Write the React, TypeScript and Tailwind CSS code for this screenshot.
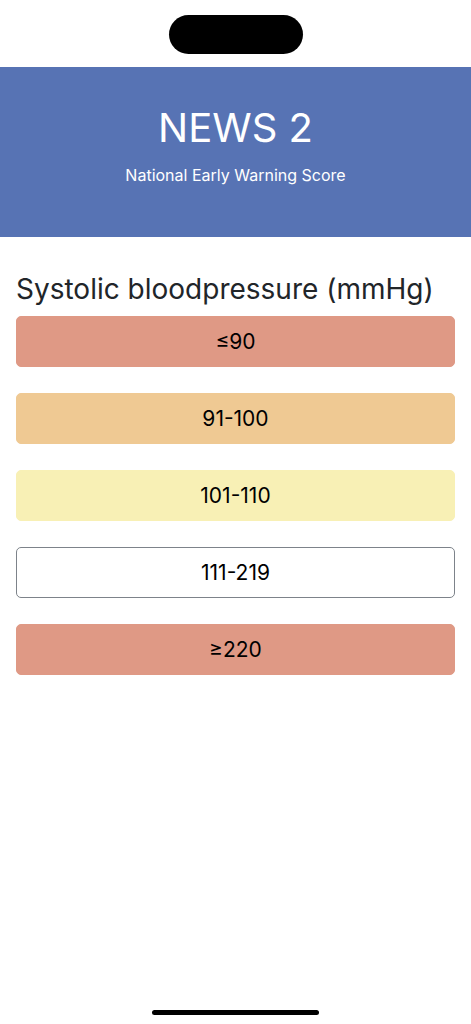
const ranges = [
  { label: "≤90", className: "bg-[#df9985] border-[#df9985]" },
  { label: "91-100", className: "bg-[#efc993] border-[#efc993]" },
  { label: "101-110", className: "bg-[#f8f0b5] border-[#f8f0b5]" },
  { label: "111-219", className: "bg-white border-[#7d838a]" },
  { label: "≥220", className: "bg-[#df9985] border-[#df9985]" },
];

export default function App() {
  return (
    <div className="relative min-h-[1024px] bg-white font-['Inter',sans-serif] text-[#212529]">
      {/* status bar / dynamic island */}
      <div className="flex h-[67px] justify-center pt-[15px]">
        <div className="h-[39px] w-[134px] rounded-full bg-black" />
      </div>

      <header className="flex h-[170px] flex-col items-center bg-[#5773b4] pt-[37px] text-white">
        <h1 className="text-[40px] leading-[48px]">NEWS 2</h1>
        <p className="mt-[13px] text-[16px] leading-[20px]">National Early Warning Score</p>
      </header>

      <main className="px-4 pt-[35px]">
        <h2 className="text-[28px] leading-[35px]">Systolic bloodpressure (mmHg)</h2>
        <div className="mt-[9px] flex flex-col gap-[26px]">
          {ranges.map((r) => (
            <button
              key={r.label}
              className={`h-[51px] w-full rounded-[5px] border text-[21px] text-black ${r.className}`}
            >
              {r.label}
            </button>
          ))}
        </div>
      </main>

      <div className="absolute bottom-[9px] left-0 right-0 flex justify-center">
        <div className="h-[5px] w-[167px] rounded-full bg-black" />
      </div>
    </div>
  );
}
